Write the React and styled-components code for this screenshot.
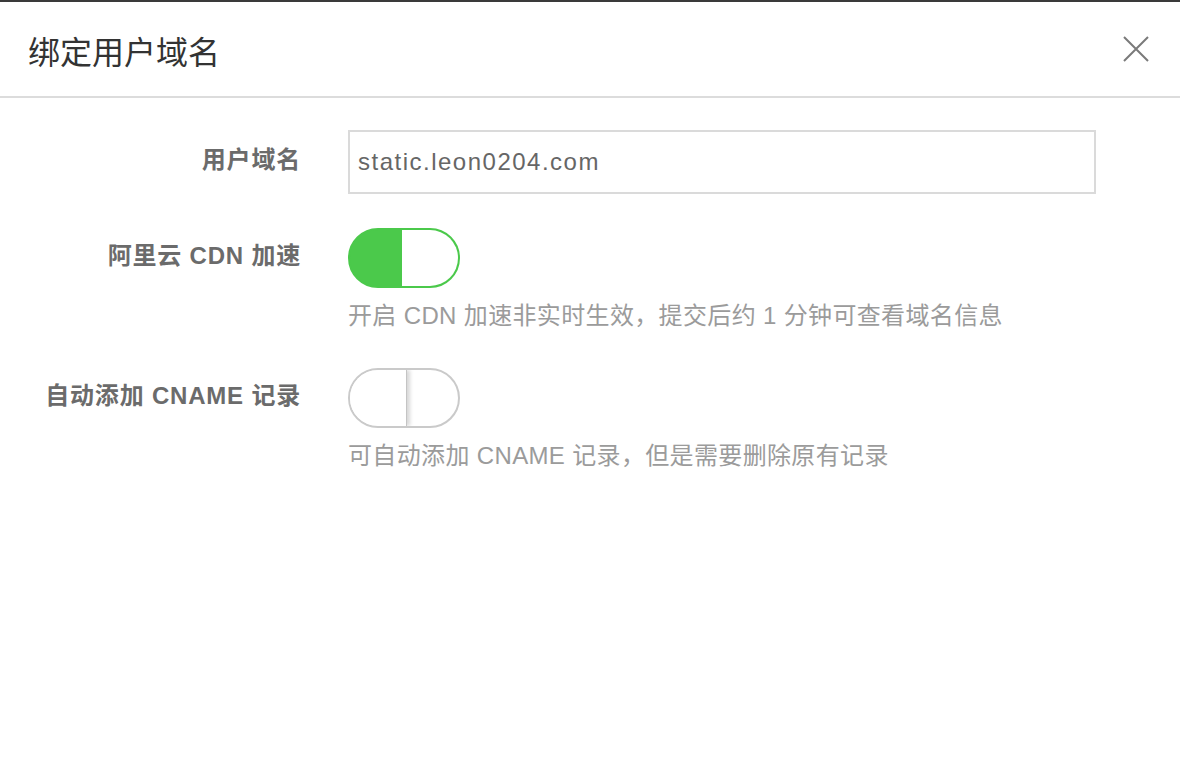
import styled, { createGlobalStyle } from 'styled-components';
import { useState } from 'react';

const GlobalStyle = createGlobalStyle`
  html, body {
    margin: 0;
    padding: 0;
    background: #fff;
  }
  body {
    font-family: "Liberation Sans", "Noto Sans CJK SC", sans-serif;
  }
  * {
    box-sizing: border-box;
  }
`;

const Switch = ({ on, onToggle }) => (
  <Track type="button" $on={on} onClick={onToggle}>
    <Knob $on={on} />
  </Track>
);

const App = () => {
  const [domain, setDomain] = useState('static.leon0204.com');
  const [cdn, setCdn] = useState(true);
  const [cname, setCname] = useState(false);

  return (
    <Dialog>
      <GlobalStyle />
      <Header>
        <Title>绑定用户域名</Title>
        <CloseButton type="button" aria-label="关闭">
          <svg width="26" height="26" viewBox="0 0 26 26">
            <path d="M1 1L25 25M25 1L1 25" stroke="#7a7a7a" strokeWidth="2" fill="none" />
          </svg>
        </CloseButton>
      </Header>

      <Form>
        <Label $h={64}>用户域名</Label>
        <Field>
          <Input value={domain} onChange={(e) => setDomain(e.target.value)} />
        </Field>

        <Label $h={60}>阿里云 CDN 加速</Label>
        <Field>
          <Switch on={cdn} onToggle={() => setCdn(!cdn)} />
          <Help>开启 CDN 加速非实时生效，提交后约 1 分钟可查看域名信息</Help>
        </Field>

        <Label $h={60}>自动添加 CNAME 记录</Label>
        <Field>
          <Switch on={cname} onToggle={() => setCname(!cname)} />
          <Help>可自动添加 CNAME 记录，但是需要删除原有记录</Help>
        </Field>
      </Form>
    </Dialog>
  );
};

const Dialog = styled.div`
  width: 1180px;
  min-height: 772px;
  background: #fff;
  border-top: 2px solid #3a3a3a;
`;

const Header = styled.div`
  display: flex;
  align-items: center;
  justify-content: space-between;
  height: 96px;
  padding: 0 31px 0 28px;
  border-bottom: 2px solid #dcdcdc;
`;

const Title = styled.h1`
  margin: 0;
  font-size: 32px;
  font-weight: normal;
  color: #333;
  transform: translateY(1px);
`;

const CloseButton = styled.button`
  display: flex;
  padding: 0;
  border: none;
  background: none;
  cursor: pointer;
`;

const Form = styled.div`
  display: grid;
  grid-template-columns: 300px 1fr;
  column-gap: 48px;
  row-gap: 34px;
  padding: 32px 84px 0 0;
`;

const Label = styled.div`
  display: flex;
  align-items: center;
  justify-content: flex-end;
  height: ${(p) => p.$h}px;
  padding-bottom: 9px;
  margin-right: -1px;
  font-size: 24px;
  font-weight: bold;
  letter-spacing: 0.8px;
  color: #6b6b6b;
  white-space: nowrap;
`;

const Field = styled.div`
  display: flex;
  flex-direction: column;
  align-items: flex-start;
`;

const Input = styled.input`
  width: 100%;
  height: 64px;
  padding: 0 8px;
  border: 2px solid #dadada;
  border-radius: 0;
  outline: none;
  font-family: inherit;
  font-size: 24px;
  letter-spacing: 1.5px;
  color: #666;
  background: #fff;
`;

const Track = styled.button`
  display: flex;
  justify-content: ${(p) => (p.$on ? 'flex-end' : 'flex-start')};
  width: 112px;
  height: 60px;
  padding: 0;
  border: 2px solid ${(p) => (p.$on ? '#4bc94b' : '#cacaca')};
  border-radius: 30px;
  background: ${(p) => (p.$on ? '#4bc94b' : '#fff')};
  overflow: hidden;
  cursor: pointer;
`;

const Knob = styled.span`
  display: block;
  width: ${(p) => (p.$on ? 56 : 57)}px;
  height: 100%;
  background: #fff;
  border-right: ${(p) => (p.$on ? 'none' : '1px solid #c4c4c4')};
  box-shadow: ${(p) => (p.$on ? 'none' : '3px 0 4px rgba(0, 0, 0, 0.16)')};
`;

const Help = styled.div`
  margin: 12px 0 2px;
  line-height: 32px;
  font-size: 24px;
  letter-spacing: 0.35px;
  color: #9b9b9b;
  white-space: nowrap;
`;

export default App;
